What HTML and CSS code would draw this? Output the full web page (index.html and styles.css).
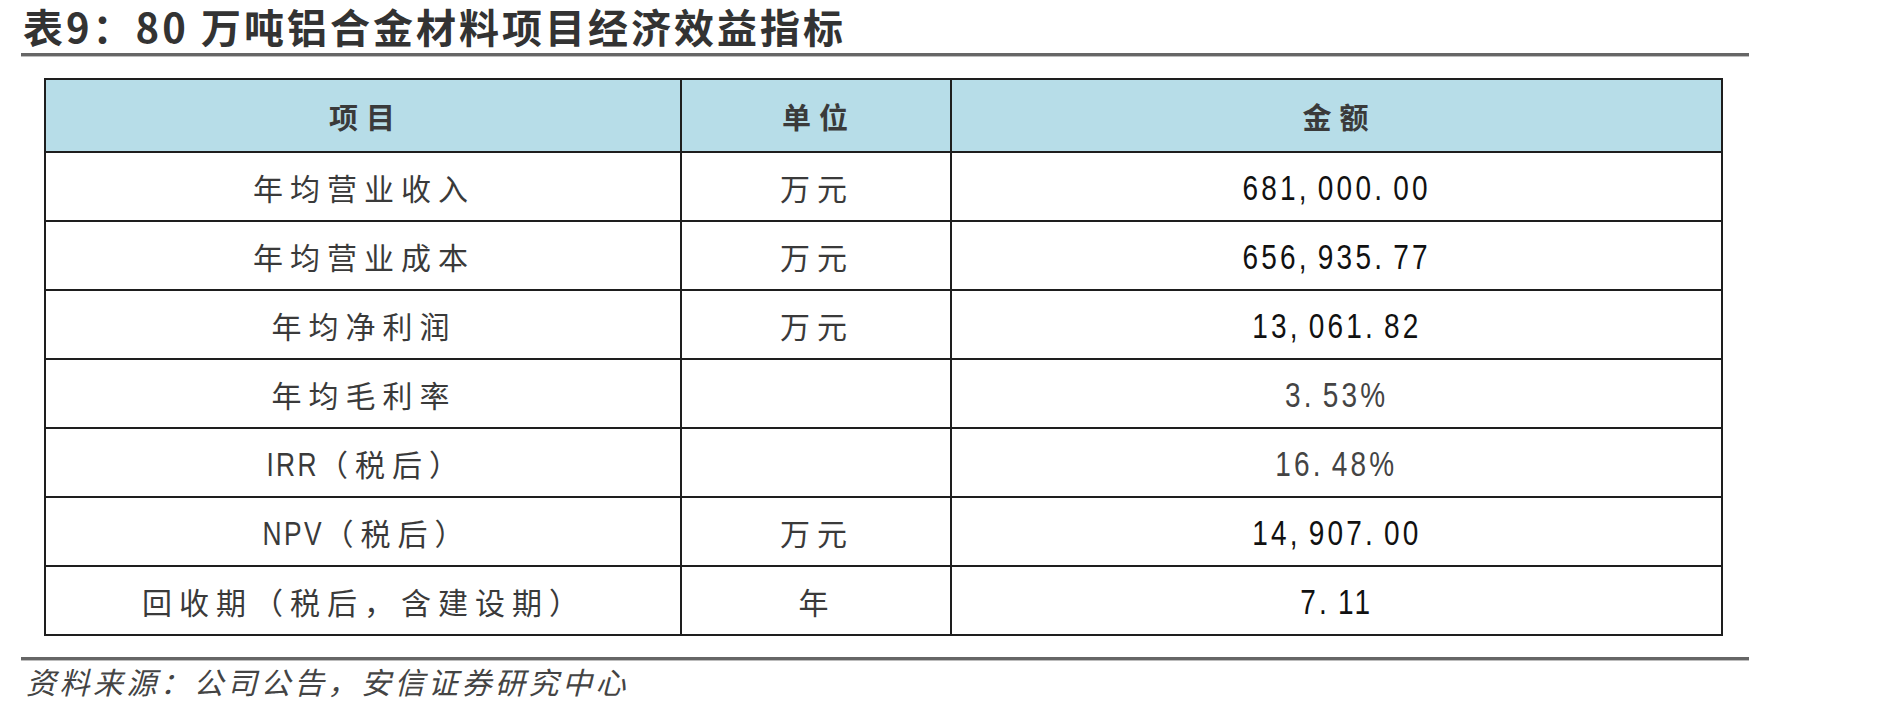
FILE: index.html
```html
<!DOCTYPE html>
<html lang="zh-CN">
<head>
<meta charset="utf-8">
<title>表9</title>
<link rel="stylesheet" href="styles.css">
</head>
<body>
<div class="page">
  <h1 class="title">表9：80 万吨铝合金材料项目经济效益指标</h1>
  <div class="rule"></div>
  <div class="table-wrap">
    <table class="grid">
      <colgroup>
        <col class="c1"><col class="c2"><col class="c3">
      </colgroup>
      <thead>
        <tr><th>项目</th><th>单位</th><th>金额</th></tr>
      </thead>
      <tbody>
        <tr><td class="name">年均营业收入</td><td class="unit">万元</td><td class="num"><span class="nar">681<span class="p">,</span>000<span class="p">.</span>00</span></td></tr>
        <tr><td class="name">年均营业成本</td><td class="unit">万元</td><td class="num"><span class="nar">656<span class="p">,</span>935<span class="p">.</span>77</span></td></tr>
        <tr><td class="name">年均净利润</td><td class="unit">万元</td><td class="num"><span class="nar">13<span class="p">,</span>061<span class="p">.</span>82</span></td></tr>
        <tr><td class="name">年均毛利率</td><td class="unit"></td><td class="num grey"><span class="nar">3<span class="p">.</span>53%</span></td></tr>
        <tr><td class="name"><span class="latin">IRR</span>（税后）</td><td class="unit"></td><td class="num grey"><span class="nar">16<span class="p">.</span>48%</span></td></tr>
        <tr><td class="name"><span class="latin">NPV</span>（税后）</td><td class="unit">万元</td><td class="num"><span class="nar">14<span class="p">,</span>907<span class="p">.</span>00</span></td></tr>
        <tr><td class="name">回收期（税后，含建设期）</td><td class="unit">年</td><td class="num"><span class="nar">7<span class="p">.</span>11</span></td></tr>
      </tbody>
    </table>
  </div>
  <div class="rule foot-rule"></div>
  <p class="source">资料来源：公司公告，安信证券研究中心</p>
</div>
</body>
</html>
```

FILE: styles.css
```css
html, body {
  margin: 0;
  padding: 0;
  background: #ffffff;
}

.page {
  width: 1728px;
  padding-left: 21px;
  padding-top: 0;
  font-family: "Noto Sans CJK SC", "Noto Sans", sans-serif;
  color: #333333;
}

.title {
  margin: 0;
  padding-left: 2px;
  height: 53px;
  font-size: 40px;
  line-height: 52px;
  font-weight: 700;
  letter-spacing: 3px;
  color: #333333;
  white-space: nowrap;
}

.rule {
  height: 3px;
  background: #666666;
  border-bottom: 1px solid #bdbdbd;
}

.table-wrap {
  padding: 21px 28px 0 23px;
}

.grid {
  width: 1677px;
  border-collapse: collapse;
  table-layout: fixed;
}

.c1 { width: 636px; }
.c2 { width: 270px; }
.c3 { width: 771px; }

.grid th,
.grid td {
  border: 2px solid #1e1e1e;
  text-align: center;
  vertical-align: middle;
  padding: 0;
}

.grid th {
  background: #b7dde8;
  height: 71px;
  font-size: 29px;
  font-weight: 700;
  letter-spacing: 8px;
  text-indent: 6px;
  color: #3a3a3a;
}

.grid td {
  height: 67px;
  font-size: 30px;
  font-weight: 400;
  letter-spacing: 7px;
  text-indent: 2px;
  color: #3a3a3a;
}

.latin {
  display: inline-block;
  font-family: "Liberation Sans", sans-serif;
  font-size: 33px;
  letter-spacing: 3px;
  transform: scaleX(0.8);
  margin: 0 -8px 0 -4px;
}

.grid td.num {
  text-indent: 0;
  letter-spacing: 0;
  color: #111111;
}

.nar {
  display: inline-block;
  font-family: "Liberation Sans", sans-serif;
  font-size: 35px;
  letter-spacing: 4px;
  transform: scaleX(0.8);
}

.p {
  margin-right: 10px;
}

.grid td.num.grey {
  color: #444444;
}

.foot-rule {
  margin-top: 21px;
}

.source {
  margin: 0 0 0 5px;
  font-size: 30px;
  font-style: italic;
  letter-spacing: 3.5px;
  color: #444444;
  line-height: 40px;
}
```
